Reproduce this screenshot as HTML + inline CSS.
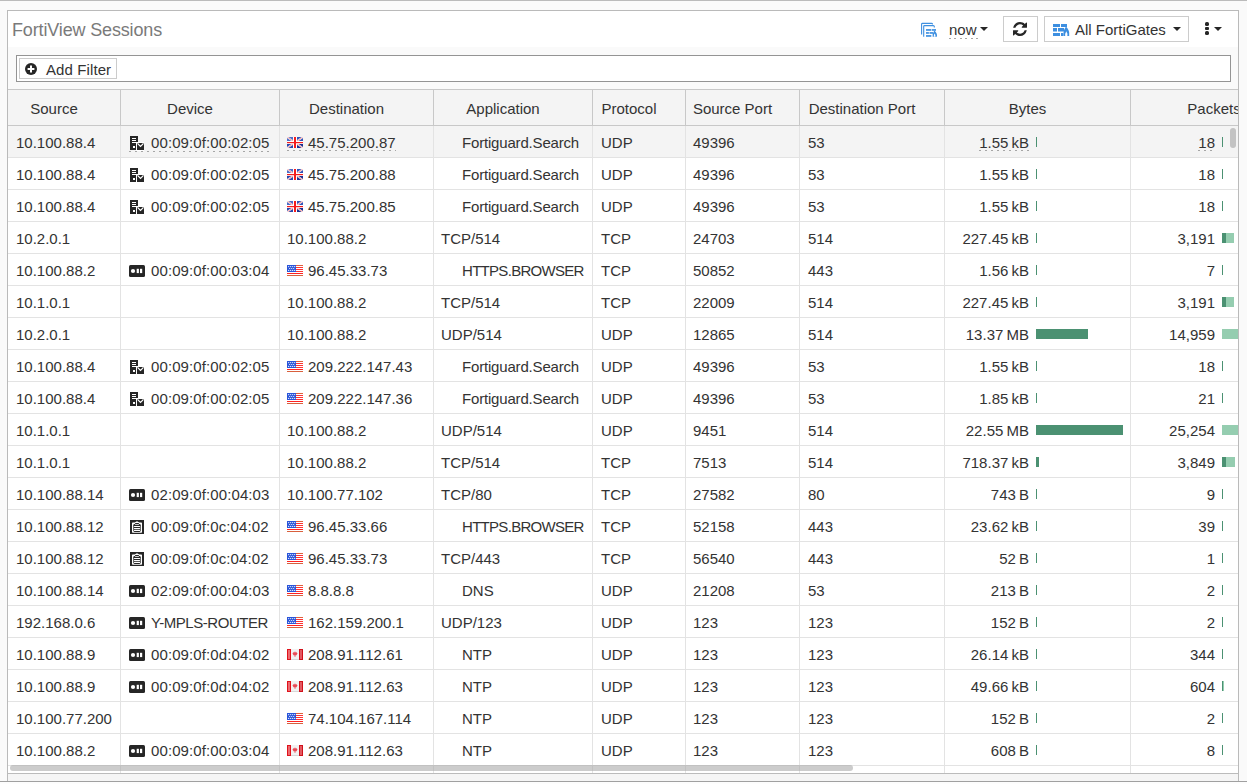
<!DOCTYPE html><html><head><meta charset="utf-8"><style>
*{box-sizing:border-box;margin:0;padding:0}
html,body{width:1247px;height:784px;overflow:hidden;background:#fdfdfd;font-family:"Liberation Sans",sans-serif;color:#333}
.a{position:absolute}
#pg{position:absolute;left:0;top:0;width:1247px;height:782px;background:#fafafa;border-top:1px solid #bbb;border-bottom:1px solid #a0a0a0}
#panel{position:absolute;left:7px;top:10px;width:1232px;height:771px;border:1px solid #bababa;border-bottom:none;background:#fff}
#title{position:absolute;left:12px;top:21px;font-size:18px;line-height:18px;color:#7a7a7a;white-space:nowrap;letter-spacing:-0.15px}
#filt{position:absolute;left:8px;top:47px;width:1230px;height:42px;background:#fafafa}
#finput{position:absolute;left:16px;top:55px;width:1215px;height:27px;border:1px solid #949494;background:#fff}
#fbtn{position:absolute;left:19px;top:58px;width:98px;height:21px;border:1px solid #ccc;background:#fff}
#hdr{position:absolute;left:8px;top:89px;width:1230px;height:37px;background:#f4f4f4;border-top:1px solid #c8c8c8;border-bottom:1px solid #c8c8c8}
.hl{position:absolute;top:90px;height:35px;line-height:37px;font-size:15px;white-space:nowrap;text-align:center}
.hb{position:absolute;top:90px;width:1px;height:35px;background:#c8c8c8}
.row{position:absolute;left:0;width:1247px;height:32px;border-bottom:1px solid #e3e3e3}
.row.hov{background:#f4f4f4}
.t,.tr{position:absolute;top:0;height:31px;line-height:34px;font-size:15px;white-space:nowrap}
.ic{position:absolute;left:0;top:10px}
.fl{position:absolute;left:0;top:11px}
.dv{margin-left:22px}
.dt{margin-left:21px}
.u::after{content:"";position:absolute;left:0;right:0;top:25px;height:1px;background:repeating-linear-gradient(90deg,#a6a6a6 0 2px,transparent 2px 6px)}
.dst.u::after{top:24px}
.tr.u::after{top:24px}
.bar{position:absolute;top:11px;height:10px;background:#4b9172}
.bar.lt{background:#95cdb0}
.vb{position:absolute;top:126px;width:1px;height:647px;background:#e3e3e3}
.blue{fill:#3d8fe0}
</style></head><body><div id="pg"></div><div id="panel"></div><div id="title">FortiView Sessions</div><svg class="a" style="left:920px;top:22px" width="18" height="16" viewBox="0 0 18 16"><g fill="none" stroke="#3d8fe0" stroke-width="1.1"><path d="M1.6 12.6 V2.2 Q1.6 1.4 2.4 1.4 H11.6 Q12.4 1.4 12.6 2.4"/><path d="M3.7 14.8 V4.4 Q3.7 3.6 4.5 3.6 H13.4 Q14.3 3.6 14.3 4.6 V5.6"/></g><g fill="#3d8fe0"><rect x="6" y="7.1" width="5.3" height="1.7"/><rect x="11.9" y="7.1" width="4.1" height="1.7"/><rect x="6" y="10.1" width="2.9" height="1.7"/><rect x="9.5" y="10.1" width="3.5" height="1.7"/><rect x="6" y="13.1" width="5.3" height="1.7"/><path d="M14.4 8.6 Q17.6 11.5 16.9 14.8 H12.6 Q12.2 11.8 14.4 8.6Z"/></g><path d="M14.6 11.6 Q15.7 13 15.4 14.8 H13.9 Q13.6 13 14.6 11.6Z" fill="#fff"/></svg><div class="a" style="left:949px;top:21px;font-size:15px;line-height:18px;white-space:nowrap">now</div><div class="a" style="left:949px;top:38px;width:29px;height:1px;background:repeating-linear-gradient(90deg,#a6a6a6 0 2px,transparent 2px 5.5px)"></div><svg class="a" style="left:980px;top:27px" width="8" height="4" viewBox="0 0 8 4"><path d="M0 0H8L4 4Z" fill="#262626"/></svg><div class="a" style="left:1003px;top:16px;width:35px;height:26px;border:1px solid #ccc;background:#fff"></div><svg class="a" style="left:1013px;top:22px" width="14" height="14" viewBox="128 128 1536 1536"><path fill="#262626" d="M1639 1056q0 5-1 7-64 268-268 434.5t-478 166.5q-146 0-282.5-55t-243.5-157l-129 129q-19 19-45 19t-45-19-19-45v-448q0-26 19-45t45-19h448q26 0 45 19t19 45-19 45l-137 137q71 66 161 102t187 36q134 0 250-65t186-179q11-17 53-117 8-23 30-23h192q13 0 22.5 9.5t9.5 22.5zm25-800v448q0 26-19 45t-45 19h-448q-26 0-45-19t-19-45 19-45l138-138q-148-137-349-137-134 0-250 65t-186 179q-11 17-53 117-8 23-30 23h-199q-13 0-22.5-9.5t-9.5-22.5v-7q65-268 270-434.5t480-166.5q146 0 284 55.5t245 156.5l130-129q19-19 45-19t45 19 19 45z"/></svg><div class="a" style="left:1044px;top:16px;width:145px;height:26px;border:1px solid #ccc;background:#fff"></div><svg class="a" style="left:1052px;top:23px" width="18" height="14" viewBox="0 0 18 14"><g fill="#3d8fe0"><rect x="1" y="1" width="7" height="3"/><rect x="9" y="1" width="6" height="3"/><rect x="1" y="5" width="4" height="3.5"/><rect x="6" y="5" width="6" height="3.5"/><rect x="1" y="10" width="7" height="3"/><rect x="9" y="10" width="2" height="3"/><path d="M14 3.5 Q17.8 7 17.2 13 H11.4 Q10.8 8 14 3.5Z"/></g><path d="M14.3 8.2 Q15.8 10.5 15.3 13 H13.2 Q12.9 10.5 14.3 8.2Z" fill="#fff"/></svg><div class="a" style="left:1075px;top:21px;font-size:15px;line-height:18px;white-space:nowrap">All FortiGates</div><svg class="a" style="left:1173px;top:27px" width="8" height="4" viewBox="0 0 8 4"><path d="M0 0H8L4 4Z" fill="#262626"/></svg><svg class="a" style="left:1205px;top:22px" width="4" height="13" viewBox="0 0 4 13"><g fill="#262626"><rect x="0" y="0" width="4" height="4" rx="1.6"/><rect x="0" y="5" width="4" height="3" rx="1"/><rect x="0" y="9" width="4" height="4" rx="1.6"/></g></svg><svg class="a" style="left:1214px;top:27px" width="8" height="4" viewBox="0 0 8 4"><path d="M0 0H8L4 4Z" fill="#262626"/></svg><div id="filt"></div><div id="finput"></div><div id="fbtn"></div><svg class="a" style="left:25px;top:63px" width="12" height="12" viewBox="0 0 12 12"><circle cx="6" cy="6" r="6" fill="#262626"/><path d="M6 2.6V9.4M2.6 6H9.4" stroke="#fff" stroke-width="2"/></svg><div class="a" style="left:46px;top:61px;font-size:15px;line-height:18px;white-space:nowrap;letter-spacing:0.1px">Add Filter</div><div id="hdr"></div><div class="a" style="left:0;top:0;width:1238px;height:784px;overflow:hidden"><div class="hl" style="left:8px;width:92px">Source</div><div class="hl" style="left:121px;width:138px">Device</div><div class="hl" style="left:280px;width:133px">Destination</div><div class="hl" style="left:434px;width:138px">Application</div><div class="hl" style="left:593px;width:72px">Protocol</div><div class="hl" style="left:686px;width:93px">Source Port</div><div class="hl" style="left:800px;width:124px">Destination Port</div><div class="hl" style="left:945px;width:165px">Bytes</div><div class="hl" style="left:1131px;width:166px">Packets</div><div class="hb" style="left:120px"></div><div class="hb" style="left:279px"></div><div class="hb" style="left:433px"></div><div class="hb" style="left:592px"></div><div class="hb" style="left:685px"></div><div class="hb" style="left:799px"></div><div class="hb" style="left:944px"></div><div class="hb" style="left:1130px"></div></div><div class="a" style="left:8px;top:0;width:1230px;height:773px;overflow:hidden"><div class="a" style="left:-8px;top:0"><div class="row hov" style="top:126px"><span class="t" style="left:16px">10.100.88.4</span><span class="t u" style="left:129px"><svg class="ic" width="16" height="16" viewBox="0 0 16 16"><rect x="1" y="0" width="8" height="14" fill="#262626"/><rect x="3" y="2" width="4" height="1" fill="#fff"/><rect x="3" y="4" width="4" height="1" fill="#fff"/><rect x="3" y="6" width="4" height="1" fill="#fff"/><rect x="4" y="10" width="2" height="2" fill="#fff"/><rect x="7" y="6" width="8" height="9" fill="#fff"/><rect x="8" y="7" width="7" height="7" fill="#262626"/><path d="M8.5 7.4 L11.5 10.4 L14.5 7.4" stroke="#fff" stroke-width="1.3" fill="none"/></svg><span class="dv" style="letter-spacing:0.1px">00:09:0f:00:02:05</span></span><span class="t dst u" style="left:287px"><svg class="fl" width="16" height="11" viewBox="0 0 16 11"><rect width="16" height="11" fill="#fff"/><rect x="0" y="0" width="6" height="4" fill="#4d6cc6"/><rect x="10" y="0" width="6" height="4" fill="#3354b8"/><rect x="0" y="7" width="6" height="4" fill="#2a47ad"/><rect x="10" y="7" width="6" height="4" fill="#1b2f90"/><path d="M0 0L16 11M16 0L0 11" stroke="#fff" stroke-width="1.6"/><path d="M0.5 0.3L6 4M10 7L15.5 10.7M15.5 0.3L10 4M6 7L0.5 10.7" stroke="#ee5555" stroke-width="0.6"/><rect x="6" y="0" width="4" height="11" fill="#fff"/><rect x="0" y="4" width="16" height="3" fill="#fff"/><rect x="7" y="0" width="2" height="11" fill="#f51c1c"/><rect x="0" y="5" width="16" height="1.2" fill="#f51c1c"/></svg><span class="dt">45.75.200.87</span></span><span class="t" style="letter-spacing:-0.18px;left:462px">Fortiguard.Search</span><span class="t" style="left:601px">UDP</span><span class="t" style="left:693px">49396</span><span class="t" style="left:808px">53</span><span class="tr u" style="right:218px;word-spacing:-1px">1.55 kB</span><div class="bar" style="left:1036px;width:1px"></div><span class="tr u" style="right:32px">18</span><div class="bar" style="left:1222px;width:1px"></div></div><div class="row" style="top:158px"><span class="t" style="left:16px">10.100.88.4</span><span class="t" style="left:129px"><svg class="ic" width="16" height="16" viewBox="0 0 16 16"><rect x="1" y="0" width="8" height="14" fill="#262626"/><rect x="3" y="2" width="4" height="1" fill="#fff"/><rect x="3" y="4" width="4" height="1" fill="#fff"/><rect x="3" y="6" width="4" height="1" fill="#fff"/><rect x="4" y="10" width="2" height="2" fill="#fff"/><rect x="7" y="6" width="8" height="9" fill="#fff"/><rect x="8" y="7" width="7" height="7" fill="#262626"/><path d="M8.5 7.4 L11.5 10.4 L14.5 7.4" stroke="#fff" stroke-width="1.3" fill="none"/></svg><span class="dv" style="letter-spacing:0.1px">00:09:0f:00:02:05</span></span><span class="t dst" style="left:287px"><svg class="fl" width="16" height="11" viewBox="0 0 16 11"><rect width="16" height="11" fill="#fff"/><rect x="0" y="0" width="6" height="4" fill="#4d6cc6"/><rect x="10" y="0" width="6" height="4" fill="#3354b8"/><rect x="0" y="7" width="6" height="4" fill="#2a47ad"/><rect x="10" y="7" width="6" height="4" fill="#1b2f90"/><path d="M0 0L16 11M16 0L0 11" stroke="#fff" stroke-width="1.6"/><path d="M0.5 0.3L6 4M10 7L15.5 10.7M15.5 0.3L10 4M6 7L0.5 10.7" stroke="#ee5555" stroke-width="0.6"/><rect x="6" y="0" width="4" height="11" fill="#fff"/><rect x="0" y="4" width="16" height="3" fill="#fff"/><rect x="7" y="0" width="2" height="11" fill="#f51c1c"/><rect x="0" y="5" width="16" height="1.2" fill="#f51c1c"/></svg><span class="dt">45.75.200.88</span></span><span class="t" style="letter-spacing:-0.18px;left:462px">Fortiguard.Search</span><span class="t" style="left:601px">UDP</span><span class="t" style="left:693px">49396</span><span class="t" style="left:808px">53</span><span class="tr" style="right:218px;word-spacing:-1px">1.55 kB</span><div class="bar" style="left:1036px;width:1px"></div><span class="tr" style="right:32px">18</span><div class="bar" style="left:1222px;width:1px"></div></div><div class="row" style="top:190px"><span class="t" style="left:16px">10.100.88.4</span><span class="t" style="left:129px"><svg class="ic" width="16" height="16" viewBox="0 0 16 16"><rect x="1" y="0" width="8" height="14" fill="#262626"/><rect x="3" y="2" width="4" height="1" fill="#fff"/><rect x="3" y="4" width="4" height="1" fill="#fff"/><rect x="3" y="6" width="4" height="1" fill="#fff"/><rect x="4" y="10" width="2" height="2" fill="#fff"/><rect x="7" y="6" width="8" height="9" fill="#fff"/><rect x="8" y="7" width="7" height="7" fill="#262626"/><path d="M8.5 7.4 L11.5 10.4 L14.5 7.4" stroke="#fff" stroke-width="1.3" fill="none"/></svg><span class="dv" style="letter-spacing:0.1px">00:09:0f:00:02:05</span></span><span class="t dst" style="left:287px"><svg class="fl" width="16" height="11" viewBox="0 0 16 11"><rect width="16" height="11" fill="#fff"/><rect x="0" y="0" width="6" height="4" fill="#4d6cc6"/><rect x="10" y="0" width="6" height="4" fill="#3354b8"/><rect x="0" y="7" width="6" height="4" fill="#2a47ad"/><rect x="10" y="7" width="6" height="4" fill="#1b2f90"/><path d="M0 0L16 11M16 0L0 11" stroke="#fff" stroke-width="1.6"/><path d="M0.5 0.3L6 4M10 7L15.5 10.7M15.5 0.3L10 4M6 7L0.5 10.7" stroke="#ee5555" stroke-width="0.6"/><rect x="6" y="0" width="4" height="11" fill="#fff"/><rect x="0" y="4" width="16" height="3" fill="#fff"/><rect x="7" y="0" width="2" height="11" fill="#f51c1c"/><rect x="0" y="5" width="16" height="1.2" fill="#f51c1c"/></svg><span class="dt">45.75.200.85</span></span><span class="t" style="letter-spacing:-0.18px;left:462px">Fortiguard.Search</span><span class="t" style="left:601px">UDP</span><span class="t" style="left:693px">49396</span><span class="t" style="left:808px">53</span><span class="tr" style="right:218px;word-spacing:-1px">1.55 kB</span><div class="bar" style="left:1036px;width:1px"></div><span class="tr" style="right:32px">18</span><div class="bar" style="left:1222px;width:1px"></div></div><div class="row" style="top:222px"><span class="t" style="left:16px">10.2.0.1</span><span class="t" style="left:287px">10.100.88.2</span><span class="t" style="left:441px">TCP/514</span><span class="t" style="left:601px">TCP</span><span class="t" style="left:693px">24703</span><span class="t" style="left:808px">514</span><span class="tr" style="right:218px;word-spacing:-1px">227.45 kB</span><div class="bar" style="left:1036px;width:1px"></div><span class="tr" style="right:32px">3,191</span><div class="bar" style="left:1222px;width:4px"></div><div class="bar lt" style="left:1226px;width:8px"></div></div><div class="row" style="top:254px"><span class="t" style="left:16px">10.100.88.2</span><span class="t" style="left:129px"><svg class="ic" width="16" height="16" viewBox="0 0 16 16"><rect x="0" y="1" width="16" height="12" rx="1.5" fill="#262626"/><circle cx="4" cy="7" r="2.1" fill="#fff"/><rect x="7.7" y="4.8" width="2.2" height="4.3" fill="#fff"/><rect x="11" y="4.8" width="2.2" height="4.3" fill="#fff"/></svg><span class="dv" style="letter-spacing:0.1px">00:09:0f:00:03:04</span></span><span class="t dst" style="left:287px"><svg class="fl" width="16" height="11" viewBox="0 0 16 11"><rect width="16" height="11" fill="#fff"/><rect y="0" width="16" height="1" fill="#e0603d"/><rect y="2" width="16" height="1" fill="#f33"/><rect y="4" width="16" height="1" fill="#f33"/><rect y="6" width="16" height="1" fill="#f33"/><rect y="8" width="16" height="1" fill="#f22"/><rect y="10" width="16" height="1" fill="#d9603d"/><rect x="0" y="0" width="9" height="7" fill="#2a55d9"/><g fill="#fff"><circle cx="1.7" cy="1.6" r=".6"/><circle cx="3.7" cy="1.6" r=".6"/><circle cx="5.7" cy="1.6" r=".6"/><circle cx="7.7" cy="1.6" r=".6"/><circle cx="2.7" cy="3.5" r=".6"/><circle cx="4.7" cy="3.5" r=".6"/><circle cx="6.7" cy="3.5" r=".6"/><circle cx="1.7" cy="5.4" r=".6"/><circle cx="3.7" cy="5.4" r=".6"/><circle cx="5.7" cy="5.4" r=".6"/><circle cx="7.7" cy="5.4" r=".6"/></g></svg><span class="dt">96.45.33.73</span></span><span class="t" style="letter-spacing:-0.7px;left:462px">HTTPS.BROWSER</span><span class="t" style="left:601px">TCP</span><span class="t" style="left:693px">50852</span><span class="t" style="left:808px">443</span><span class="tr" style="right:218px;word-spacing:-1px">1.56 kB</span><div class="bar" style="left:1036px;width:1px"></div><span class="tr" style="right:32px">7</span><div class="bar" style="left:1222px;width:1px"></div></div><div class="row" style="top:286px"><span class="t" style="left:16px">10.1.0.1</span><span class="t" style="left:287px">10.100.88.2</span><span class="t" style="left:441px">TCP/514</span><span class="t" style="left:601px">TCP</span><span class="t" style="left:693px">22009</span><span class="t" style="left:808px">514</span><span class="tr" style="right:218px;word-spacing:-1px">227.45 kB</span><div class="bar" style="left:1036px;width:1px"></div><span class="tr" style="right:32px">3,191</span><div class="bar" style="left:1222px;width:4px"></div><div class="bar lt" style="left:1226px;width:8px"></div></div><div class="row" style="top:318px"><span class="t" style="left:16px">10.2.0.1</span><span class="t" style="left:287px">10.100.88.2</span><span class="t" style="left:441px">UDP/514</span><span class="t" style="left:601px">UDP</span><span class="t" style="left:693px">12865</span><span class="t" style="left:808px">514</span><span class="tr" style="right:218px;word-spacing:-1px">13.37 MB</span><div class="bar" style="left:1036px;width:52px"></div><span class="tr" style="right:32px">14,959</span><div class="bar lt" style="left:1222px;width:20px"></div></div><div class="row" style="top:350px"><span class="t" style="left:16px">10.100.88.4</span><span class="t" style="left:129px"><svg class="ic" width="16" height="16" viewBox="0 0 16 16"><rect x="1" y="0" width="8" height="14" fill="#262626"/><rect x="3" y="2" width="4" height="1" fill="#fff"/><rect x="3" y="4" width="4" height="1" fill="#fff"/><rect x="3" y="6" width="4" height="1" fill="#fff"/><rect x="4" y="10" width="2" height="2" fill="#fff"/><rect x="7" y="6" width="8" height="9" fill="#fff"/><rect x="8" y="7" width="7" height="7" fill="#262626"/><path d="M8.5 7.4 L11.5 10.4 L14.5 7.4" stroke="#fff" stroke-width="1.3" fill="none"/></svg><span class="dv" style="letter-spacing:0.1px">00:09:0f:00:02:05</span></span><span class="t dst" style="left:287px"><svg class="fl" width="16" height="11" viewBox="0 0 16 11"><rect width="16" height="11" fill="#fff"/><rect y="0" width="16" height="1" fill="#e0603d"/><rect y="2" width="16" height="1" fill="#f33"/><rect y="4" width="16" height="1" fill="#f33"/><rect y="6" width="16" height="1" fill="#f33"/><rect y="8" width="16" height="1" fill="#f22"/><rect y="10" width="16" height="1" fill="#d9603d"/><rect x="0" y="0" width="9" height="7" fill="#2a55d9"/><g fill="#fff"><circle cx="1.7" cy="1.6" r=".6"/><circle cx="3.7" cy="1.6" r=".6"/><circle cx="5.7" cy="1.6" r=".6"/><circle cx="7.7" cy="1.6" r=".6"/><circle cx="2.7" cy="3.5" r=".6"/><circle cx="4.7" cy="3.5" r=".6"/><circle cx="6.7" cy="3.5" r=".6"/><circle cx="1.7" cy="5.4" r=".6"/><circle cx="3.7" cy="5.4" r=".6"/><circle cx="5.7" cy="5.4" r=".6"/><circle cx="7.7" cy="5.4" r=".6"/></g></svg><span class="dt">209.222.147.43</span></span><span class="t" style="letter-spacing:-0.18px;left:462px">Fortiguard.Search</span><span class="t" style="left:601px">UDP</span><span class="t" style="left:693px">49396</span><span class="t" style="left:808px">53</span><span class="tr" style="right:218px;word-spacing:-1px">1.55 kB</span><div class="bar" style="left:1036px;width:1px"></div><span class="tr" style="right:32px">18</span><div class="bar" style="left:1222px;width:1px"></div></div><div class="row" style="top:382px"><span class="t" style="left:16px">10.100.88.4</span><span class="t" style="left:129px"><svg class="ic" width="16" height="16" viewBox="0 0 16 16"><rect x="1" y="0" width="8" height="14" fill="#262626"/><rect x="3" y="2" width="4" height="1" fill="#fff"/><rect x="3" y="4" width="4" height="1" fill="#fff"/><rect x="3" y="6" width="4" height="1" fill="#fff"/><rect x="4" y="10" width="2" height="2" fill="#fff"/><rect x="7" y="6" width="8" height="9" fill="#fff"/><rect x="8" y="7" width="7" height="7" fill="#262626"/><path d="M8.5 7.4 L11.5 10.4 L14.5 7.4" stroke="#fff" stroke-width="1.3" fill="none"/></svg><span class="dv" style="letter-spacing:0.1px">00:09:0f:00:02:05</span></span><span class="t dst" style="left:287px"><svg class="fl" width="16" height="11" viewBox="0 0 16 11"><rect width="16" height="11" fill="#fff"/><rect y="0" width="16" height="1" fill="#e0603d"/><rect y="2" width="16" height="1" fill="#f33"/><rect y="4" width="16" height="1" fill="#f33"/><rect y="6" width="16" height="1" fill="#f33"/><rect y="8" width="16" height="1" fill="#f22"/><rect y="10" width="16" height="1" fill="#d9603d"/><rect x="0" y="0" width="9" height="7" fill="#2a55d9"/><g fill="#fff"><circle cx="1.7" cy="1.6" r=".6"/><circle cx="3.7" cy="1.6" r=".6"/><circle cx="5.7" cy="1.6" r=".6"/><circle cx="7.7" cy="1.6" r=".6"/><circle cx="2.7" cy="3.5" r=".6"/><circle cx="4.7" cy="3.5" r=".6"/><circle cx="6.7" cy="3.5" r=".6"/><circle cx="1.7" cy="5.4" r=".6"/><circle cx="3.7" cy="5.4" r=".6"/><circle cx="5.7" cy="5.4" r=".6"/><circle cx="7.7" cy="5.4" r=".6"/></g></svg><span class="dt">209.222.147.36</span></span><span class="t" style="letter-spacing:-0.18px;left:462px">Fortiguard.Search</span><span class="t" style="left:601px">UDP</span><span class="t" style="left:693px">49396</span><span class="t" style="left:808px">53</span><span class="tr" style="right:218px;word-spacing:-1px">1.85 kB</span><div class="bar" style="left:1036px;width:1px"></div><span class="tr" style="right:32px">21</span><div class="bar" style="left:1222px;width:1px"></div></div><div class="row" style="top:414px"><span class="t" style="left:16px">10.1.0.1</span><span class="t" style="left:287px">10.100.88.2</span><span class="t" style="left:441px">UDP/514</span><span class="t" style="left:601px">UDP</span><span class="t" style="left:693px">9451</span><span class="t" style="left:808px">514</span><span class="tr" style="right:218px;word-spacing:-1px">22.55 MB</span><div class="bar" style="left:1036px;width:87px"></div><span class="tr" style="right:32px">25,254</span><div class="bar lt" style="left:1222px;width:20px"></div></div><div class="row" style="top:446px"><span class="t" style="left:16px">10.1.0.1</span><span class="t" style="left:287px">10.100.88.2</span><span class="t" style="left:441px">TCP/514</span><span class="t" style="left:601px">TCP</span><span class="t" style="left:693px">7513</span><span class="t" style="left:808px">514</span><span class="tr" style="right:218px;word-spacing:-1px">718.37 kB</span><div class="bar" style="left:1036px;width:3px"></div><span class="tr" style="right:32px">3,849</span><div class="bar" style="left:1222px;width:4px"></div><div class="bar lt" style="left:1226px;width:9px"></div></div><div class="row" style="top:478px"><span class="t" style="left:16px">10.100.88.14</span><span class="t" style="left:129px"><svg class="ic" width="16" height="16" viewBox="0 0 16 16"><rect x="0" y="1" width="16" height="12" rx="1.5" fill="#262626"/><circle cx="4" cy="7" r="2.1" fill="#fff"/><rect x="7.7" y="4.8" width="2.2" height="4.3" fill="#fff"/><rect x="11" y="4.8" width="2.2" height="4.3" fill="#fff"/></svg><span class="dv" style="letter-spacing:0.1px">02:09:0f:00:04:03</span></span><span class="t" style="left:287px">10.100.77.102</span><span class="t" style="left:441px">TCP/80</span><span class="t" style="left:601px">TCP</span><span class="t" style="left:693px">27582</span><span class="t" style="left:808px">80</span><span class="tr" style="right:218px;word-spacing:-1px">743 B</span><div class="bar" style="left:1036px;width:1px"></div><span class="tr" style="right:32px">9</span><div class="bar" style="left:1222px;width:1px"></div></div><div class="row" style="top:510px"><span class="t" style="left:16px">10.100.88.12</span><span class="t" style="left:129px"><svg class="ic" width="16" height="16" viewBox="0 0 16 16"><rect x="1" y="0" width="14" height="14" fill="#262626"/><path d="M3 3.3 Q3 2.6 3.7 2.6 H5.6 L8 1.2 L10.4 2.6 H12.3 Q13 2.6 13 3.3 V12 Q13 12.7 12.3 12.7 H3.7 Q3 12.7 3 12 Z" fill="#fff"/><rect x="4.3" y="3.9" width="7.4" height="8" rx="1.3" fill="#262626"/><rect x="6" y="3" width="4" height="1" rx="0.5" fill="#262626"/><rect x="5.9" y="4.3" width="4.2" height="0.8" rx="0.4" fill="#fff"/><rect x="4.9" y="5.9" width="6.2" height="1.2" rx="0.6" fill="#fff"/><rect x="4.9" y="7.9" width="6.2" height="1.1" rx="0.55" fill="#fff"/><rect x="4.9" y="9.8" width="6.2" height="1.2" rx="0.6" fill="#fff"/></svg><span class="dv" style="letter-spacing:0.1px">00:09:0f:0c:04:02</span></span><span class="t dst" style="left:287px"><svg class="fl" width="16" height="11" viewBox="0 0 16 11"><rect width="16" height="11" fill="#fff"/><rect y="0" width="16" height="1" fill="#e0603d"/><rect y="2" width="16" height="1" fill="#f33"/><rect y="4" width="16" height="1" fill="#f33"/><rect y="6" width="16" height="1" fill="#f33"/><rect y="8" width="16" height="1" fill="#f22"/><rect y="10" width="16" height="1" fill="#d9603d"/><rect x="0" y="0" width="9" height="7" fill="#2a55d9"/><g fill="#fff"><circle cx="1.7" cy="1.6" r=".6"/><circle cx="3.7" cy="1.6" r=".6"/><circle cx="5.7" cy="1.6" r=".6"/><circle cx="7.7" cy="1.6" r=".6"/><circle cx="2.7" cy="3.5" r=".6"/><circle cx="4.7" cy="3.5" r=".6"/><circle cx="6.7" cy="3.5" r=".6"/><circle cx="1.7" cy="5.4" r=".6"/><circle cx="3.7" cy="5.4" r=".6"/><circle cx="5.7" cy="5.4" r=".6"/><circle cx="7.7" cy="5.4" r=".6"/></g></svg><span class="dt">96.45.33.66</span></span><span class="t" style="letter-spacing:-0.7px;left:462px">HTTPS.BROWSER</span><span class="t" style="left:601px">TCP</span><span class="t" style="left:693px">52158</span><span class="t" style="left:808px">443</span><span class="tr" style="right:218px;word-spacing:-1px">23.62 kB</span><div class="bar" style="left:1036px;width:1px"></div><span class="tr" style="right:32px">39</span><div class="bar" style="left:1222px;width:1px"></div></div><div class="row" style="top:542px"><span class="t" style="left:16px">10.100.88.12</span><span class="t" style="left:129px"><svg class="ic" width="16" height="16" viewBox="0 0 16 16"><rect x="1" y="0" width="14" height="14" fill="#262626"/><path d="M3 3.3 Q3 2.6 3.7 2.6 H5.6 L8 1.2 L10.4 2.6 H12.3 Q13 2.6 13 3.3 V12 Q13 12.7 12.3 12.7 H3.7 Q3 12.7 3 12 Z" fill="#fff"/><rect x="4.3" y="3.9" width="7.4" height="8" rx="1.3" fill="#262626"/><rect x="6" y="3" width="4" height="1" rx="0.5" fill="#262626"/><rect x="5.9" y="4.3" width="4.2" height="0.8" rx="0.4" fill="#fff"/><rect x="4.9" y="5.9" width="6.2" height="1.2" rx="0.6" fill="#fff"/><rect x="4.9" y="7.9" width="6.2" height="1.1" rx="0.55" fill="#fff"/><rect x="4.9" y="9.8" width="6.2" height="1.2" rx="0.6" fill="#fff"/></svg><span class="dv" style="letter-spacing:0.1px">00:09:0f:0c:04:02</span></span><span class="t dst" style="left:287px"><svg class="fl" width="16" height="11" viewBox="0 0 16 11"><rect width="16" height="11" fill="#fff"/><rect y="0" width="16" height="1" fill="#e0603d"/><rect y="2" width="16" height="1" fill="#f33"/><rect y="4" width="16" height="1" fill="#f33"/><rect y="6" width="16" height="1" fill="#f33"/><rect y="8" width="16" height="1" fill="#f22"/><rect y="10" width="16" height="1" fill="#d9603d"/><rect x="0" y="0" width="9" height="7" fill="#2a55d9"/><g fill="#fff"><circle cx="1.7" cy="1.6" r=".6"/><circle cx="3.7" cy="1.6" r=".6"/><circle cx="5.7" cy="1.6" r=".6"/><circle cx="7.7" cy="1.6" r=".6"/><circle cx="2.7" cy="3.5" r=".6"/><circle cx="4.7" cy="3.5" r=".6"/><circle cx="6.7" cy="3.5" r=".6"/><circle cx="1.7" cy="5.4" r=".6"/><circle cx="3.7" cy="5.4" r=".6"/><circle cx="5.7" cy="5.4" r=".6"/><circle cx="7.7" cy="5.4" r=".6"/></g></svg><span class="dt">96.45.33.73</span></span><span class="t" style="left:441px">TCP/443</span><span class="t" style="left:601px">TCP</span><span class="t" style="left:693px">56540</span><span class="t" style="left:808px">443</span><span class="tr" style="right:218px;word-spacing:-1px">52 B</span><div class="bar" style="left:1036px;width:1px"></div><span class="tr" style="right:32px">1</span><div class="bar" style="left:1222px;width:1px"></div></div><div class="row" style="top:574px"><span class="t" style="left:16px">10.100.88.14</span><span class="t" style="left:129px"><svg class="ic" width="16" height="16" viewBox="0 0 16 16"><rect x="0" y="1" width="16" height="12" rx="1.5" fill="#262626"/><circle cx="4" cy="7" r="2.1" fill="#fff"/><rect x="7.7" y="4.8" width="2.2" height="4.3" fill="#fff"/><rect x="11" y="4.8" width="2.2" height="4.3" fill="#fff"/></svg><span class="dv" style="letter-spacing:0.1px">02:09:0f:00:04:03</span></span><span class="t dst" style="left:287px"><svg class="fl" width="16" height="11" viewBox="0 0 16 11"><rect width="16" height="11" fill="#fff"/><rect y="0" width="16" height="1" fill="#e0603d"/><rect y="2" width="16" height="1" fill="#f33"/><rect y="4" width="16" height="1" fill="#f33"/><rect y="6" width="16" height="1" fill="#f33"/><rect y="8" width="16" height="1" fill="#f22"/><rect y="10" width="16" height="1" fill="#d9603d"/><rect x="0" y="0" width="9" height="7" fill="#2a55d9"/><g fill="#fff"><circle cx="1.7" cy="1.6" r=".6"/><circle cx="3.7" cy="1.6" r=".6"/><circle cx="5.7" cy="1.6" r=".6"/><circle cx="7.7" cy="1.6" r=".6"/><circle cx="2.7" cy="3.5" r=".6"/><circle cx="4.7" cy="3.5" r=".6"/><circle cx="6.7" cy="3.5" r=".6"/><circle cx="1.7" cy="5.4" r=".6"/><circle cx="3.7" cy="5.4" r=".6"/><circle cx="5.7" cy="5.4" r=".6"/><circle cx="7.7" cy="5.4" r=".6"/></g></svg><span class="dt">8.8.8.8</span></span><span class="t" style="left:462px">DNS</span><span class="t" style="left:601px">UDP</span><span class="t" style="left:693px">21208</span><span class="t" style="left:808px">53</span><span class="tr" style="right:218px;word-spacing:-1px">213 B</span><div class="bar" style="left:1036px;width:1px"></div><span class="tr" style="right:32px">2</span><div class="bar" style="left:1222px;width:1px"></div></div><div class="row" style="top:606px"><span class="t" style="left:16px">192.168.0.6</span><span class="t" style="left:129px"><svg class="ic" width="16" height="16" viewBox="0 0 16 16"><rect x="0" y="1" width="16" height="12" rx="1.5" fill="#262626"/><circle cx="4" cy="7" r="2.1" fill="#fff"/><rect x="7.7" y="4.8" width="2.2" height="4.3" fill="#fff"/><rect x="11" y="4.8" width="2.2" height="4.3" fill="#fff"/></svg><span class="dv" style="letter-spacing:-0.45px">Y-MPLS-ROUTER</span></span><span class="t dst" style="left:287px"><svg class="fl" width="16" height="11" viewBox="0 0 16 11"><rect width="16" height="11" fill="#fff"/><rect y="0" width="16" height="1" fill="#e0603d"/><rect y="2" width="16" height="1" fill="#f33"/><rect y="4" width="16" height="1" fill="#f33"/><rect y="6" width="16" height="1" fill="#f33"/><rect y="8" width="16" height="1" fill="#f22"/><rect y="10" width="16" height="1" fill="#d9603d"/><rect x="0" y="0" width="9" height="7" fill="#2a55d9"/><g fill="#fff"><circle cx="1.7" cy="1.6" r=".6"/><circle cx="3.7" cy="1.6" r=".6"/><circle cx="5.7" cy="1.6" r=".6"/><circle cx="7.7" cy="1.6" r=".6"/><circle cx="2.7" cy="3.5" r=".6"/><circle cx="4.7" cy="3.5" r=".6"/><circle cx="6.7" cy="3.5" r=".6"/><circle cx="1.7" cy="5.4" r=".6"/><circle cx="3.7" cy="5.4" r=".6"/><circle cx="5.7" cy="5.4" r=".6"/><circle cx="7.7" cy="5.4" r=".6"/></g></svg><span class="dt">162.159.200.1</span></span><span class="t" style="left:441px">UDP/123</span><span class="t" style="left:601px">UDP</span><span class="t" style="left:693px">123</span><span class="t" style="left:808px">123</span><span class="tr" style="right:218px;word-spacing:-1px">152 B</span><div class="bar" style="left:1036px;width:1px"></div><span class="tr" style="right:32px">2</span><div class="bar" style="left:1222px;width:1px"></div></div><div class="row" style="top:638px"><span class="t" style="left:16px">10.100.88.9</span><span class="t" style="left:129px"><svg class="ic" width="16" height="16" viewBox="0 0 16 16"><rect x="0" y="1" width="16" height="12" rx="1.5" fill="#262626"/><circle cx="4" cy="7" r="2.1" fill="#fff"/><rect x="7.7" y="4.8" width="2.2" height="4.3" fill="#fff"/><rect x="11" y="4.8" width="2.2" height="4.3" fill="#fff"/></svg><span class="dv" style="letter-spacing:0.1px">00:09:0f:0d:04:02</span></span><span class="t dst" style="left:287px"><svg class="fl" width="16" height="11" viewBox="0 0 16 11"><rect width="16" height="11" fill="#f2f2f2"/><rect x="4" y="10" width="8" height="1" fill="#d8d8d8"/><rect x="0" width="4" height="11" fill="#e0121b"/><rect x="12" width="4" height="11" fill="#d0101a"/><rect x="1" y="1" width="2" height="9" fill="#ec6a70"/><rect x="13" y="1" width="2" height="9" fill="#e35a62"/><path d="M8 2.3 L8.7 3.6 L9.6 3.2 L10.5 4.6 L9.4 6.2 L8.3 6.6 L8.4 8 L7.6 8 L7.7 6.6 L6.6 6.2 L5.5 4.6 L6.4 3.2 L7.3 3.6Z" fill="#e84a55"/></svg><span class="dt">208.91.112.61</span></span><span class="t" style="left:462px">NTP</span><span class="t" style="left:601px">UDP</span><span class="t" style="left:693px">123</span><span class="t" style="left:808px">123</span><span class="tr" style="right:218px;word-spacing:-1px">26.14 kB</span><div class="bar" style="left:1036px;width:1px"></div><span class="tr" style="right:32px">344</span><div class="bar" style="left:1222px;width:1px"></div></div><div class="row" style="top:670px"><span class="t" style="left:16px">10.100.88.9</span><span class="t" style="left:129px"><svg class="ic" width="16" height="16" viewBox="0 0 16 16"><rect x="0" y="1" width="16" height="12" rx="1.5" fill="#262626"/><circle cx="4" cy="7" r="2.1" fill="#fff"/><rect x="7.7" y="4.8" width="2.2" height="4.3" fill="#fff"/><rect x="11" y="4.8" width="2.2" height="4.3" fill="#fff"/></svg><span class="dv" style="letter-spacing:0.1px">00:09:0f:0d:04:02</span></span><span class="t dst" style="left:287px"><svg class="fl" width="16" height="11" viewBox="0 0 16 11"><rect width="16" height="11" fill="#f2f2f2"/><rect x="4" y="10" width="8" height="1" fill="#d8d8d8"/><rect x="0" width="4" height="11" fill="#e0121b"/><rect x="12" width="4" height="11" fill="#d0101a"/><rect x="1" y="1" width="2" height="9" fill="#ec6a70"/><rect x="13" y="1" width="2" height="9" fill="#e35a62"/><path d="M8 2.3 L8.7 3.6 L9.6 3.2 L10.5 4.6 L9.4 6.2 L8.3 6.6 L8.4 8 L7.6 8 L7.7 6.6 L6.6 6.2 L5.5 4.6 L6.4 3.2 L7.3 3.6Z" fill="#e84a55"/></svg><span class="dt">208.91.112.63</span></span><span class="t" style="left:462px">NTP</span><span class="t" style="left:601px">UDP</span><span class="t" style="left:693px">123</span><span class="t" style="left:808px">123</span><span class="tr" style="right:218px;word-spacing:-1px">49.66 kB</span><div class="bar" style="left:1036px;width:1px"></div><span class="tr" style="right:32px">604</span><div class="bar" style="left:1222px;width:1px"></div><div class="bar lt" style="left:1223px;width:1px"></div></div><div class="row" style="top:702px"><span class="t" style="left:16px">10.100.77.200</span><span class="t dst" style="left:287px"><svg class="fl" width="16" height="11" viewBox="0 0 16 11"><rect width="16" height="11" fill="#fff"/><rect y="0" width="16" height="1" fill="#e0603d"/><rect y="2" width="16" height="1" fill="#f33"/><rect y="4" width="16" height="1" fill="#f33"/><rect y="6" width="16" height="1" fill="#f33"/><rect y="8" width="16" height="1" fill="#f22"/><rect y="10" width="16" height="1" fill="#d9603d"/><rect x="0" y="0" width="9" height="7" fill="#2a55d9"/><g fill="#fff"><circle cx="1.7" cy="1.6" r=".6"/><circle cx="3.7" cy="1.6" r=".6"/><circle cx="5.7" cy="1.6" r=".6"/><circle cx="7.7" cy="1.6" r=".6"/><circle cx="2.7" cy="3.5" r=".6"/><circle cx="4.7" cy="3.5" r=".6"/><circle cx="6.7" cy="3.5" r=".6"/><circle cx="1.7" cy="5.4" r=".6"/><circle cx="3.7" cy="5.4" r=".6"/><circle cx="5.7" cy="5.4" r=".6"/><circle cx="7.7" cy="5.4" r=".6"/></g></svg><span class="dt">74.104.167.114</span></span><span class="t" style="left:462px">NTP</span><span class="t" style="left:601px">UDP</span><span class="t" style="left:693px">123</span><span class="t" style="left:808px">123</span><span class="tr" style="right:218px;word-spacing:-1px">152 B</span><div class="bar" style="left:1036px;width:1px"></div><span class="tr" style="right:32px">2</span><div class="bar" style="left:1222px;width:1px"></div></div><div class="row" style="top:734px"><span class="t" style="left:16px">10.100.88.2</span><span class="t" style="left:129px"><svg class="ic" width="16" height="16" viewBox="0 0 16 16"><rect x="0" y="1" width="16" height="12" rx="1.5" fill="#262626"/><circle cx="4" cy="7" r="2.1" fill="#fff"/><rect x="7.7" y="4.8" width="2.2" height="4.3" fill="#fff"/><rect x="11" y="4.8" width="2.2" height="4.3" fill="#fff"/></svg><span class="dv" style="letter-spacing:0.1px">00:09:0f:00:03:04</span></span><span class="t dst" style="left:287px"><svg class="fl" width="16" height="11" viewBox="0 0 16 11"><rect width="16" height="11" fill="#f2f2f2"/><rect x="4" y="10" width="8" height="1" fill="#d8d8d8"/><rect x="0" width="4" height="11" fill="#e0121b"/><rect x="12" width="4" height="11" fill="#d0101a"/><rect x="1" y="1" width="2" height="9" fill="#ec6a70"/><rect x="13" y="1" width="2" height="9" fill="#e35a62"/><path d="M8 2.3 L8.7 3.6 L9.6 3.2 L10.5 4.6 L9.4 6.2 L8.3 6.6 L8.4 8 L7.6 8 L7.7 6.6 L6.6 6.2 L5.5 4.6 L6.4 3.2 L7.3 3.6Z" fill="#e84a55"/></svg><span class="dt">208.91.112.63</span></span><span class="t" style="left:462px">NTP</span><span class="t" style="left:601px">UDP</span><span class="t" style="left:693px">123</span><span class="t" style="left:808px">123</span><span class="tr" style="right:218px;word-spacing:-1px">608 B</span><div class="bar" style="left:1036px;width:1px"></div><span class="tr" style="right:32px">8</span><div class="bar" style="left:1222px;width:1px"></div></div><div class="vb" style="left:120px"></div><div class="vb" style="left:279px"></div><div class="vb" style="left:433px"></div><div class="vb" style="left:592px"></div><div class="vb" style="left:685px"></div><div class="vb" style="left:799px"></div><div class="vb" style="left:944px"></div><div class="vb" style="left:1130px"></div><div class="a" style="left:1230px;top:128px;width:6px;height:20px;border-radius:3px;background:#c3c3c3"></div><div class="a" style="left:10px;top:765px;width:843px;height:6px;border-radius:3px;background:rgba(170,170,170,.6)"></div></div></div><div class="a" style="left:8px;top:773px;width:1230px;height:1px;background:#bbb"></div><div class="a" style="left:8px;top:774px;width:1230px;height:7px;background:#f5f5f5"></div></body></html>
